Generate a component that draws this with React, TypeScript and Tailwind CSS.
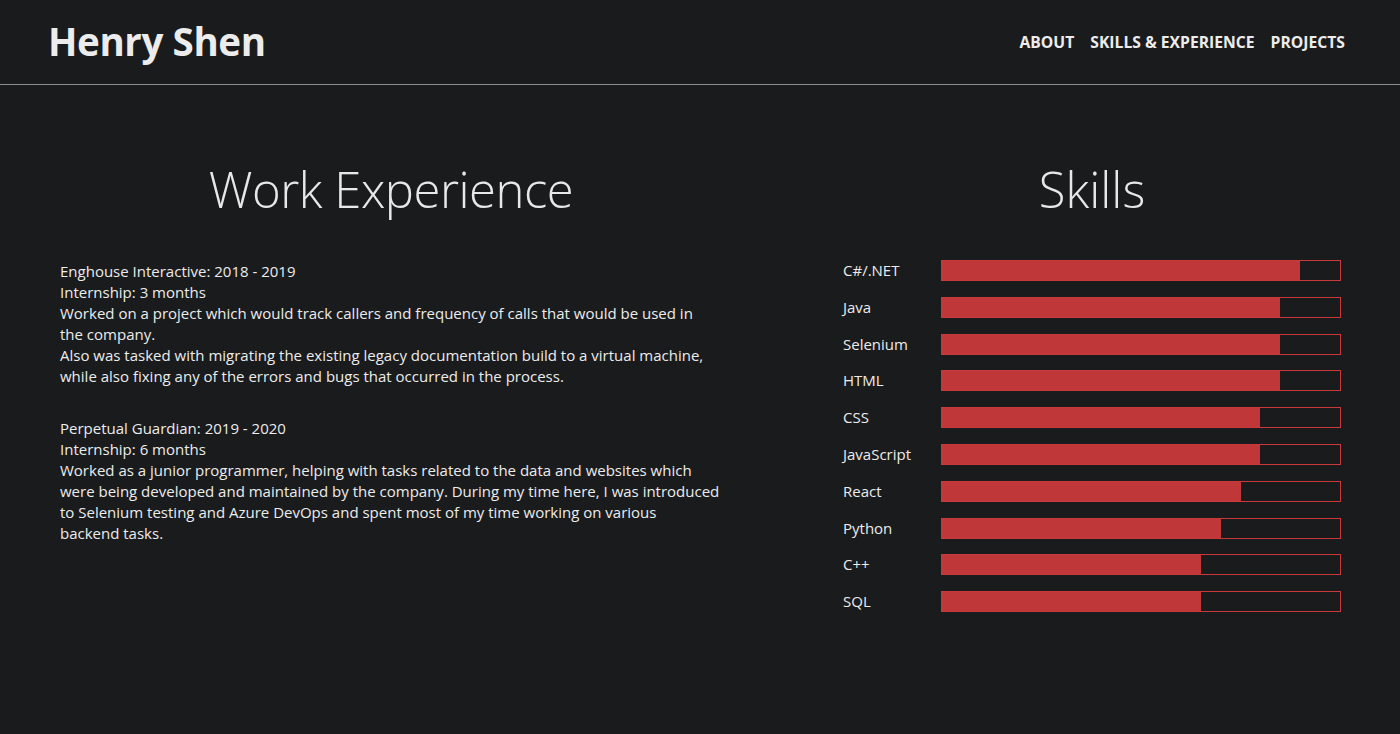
const skills = [
    { name: "C#/.NET", level: 90 },
    { name: "Java", level: 85 },
    { name: "Selenium", level: 85 },
    { name: "HTML", level: 85 },
    { name: "CSS", level: 80 },
    { name: "JavaScript", level: 80 },
    { name: "React", level: 75 },
    { name: "Python", level: 70 },
    { name: "C++", level: 65 },
    { name: "SQL", level: 65 },
];

// each entry is one printed line, broken where the original wraps
const jobs = [
    {
        title: "Enghouse Interactive: 2018 - 2019",
        lines: [
            "Internship: 3 months",
            "Worked on a project which would track callers and frequency of calls that would be used in",
            "the company.",
            "Also was tasked with migrating the existing legacy documentation build to a virtual machine,",
            "while also fixing any of the errors and bugs that occurred in the process.",
        ],
    },
    {
        title: "Perpetual Guardian: 2019 - 2020",
        lines: [
            "Internship: 6 months",
            "Worked as a junior programmer, helping with tasks related to the data and websites which",
            "were being developed and maintained by the company. During my time here, I was introduced",
            "to Selenium testing and Azure DevOps and spent most of my time working on various",
            "backend tasks.",
        ],
    },
];

export default function App() {
    return (
        <div className="min-h-[734px] bg-[#1a1b1d] text-[#ececec] font-['Segoe_UI','Open_Sans',sans-serif]">
            {/* Header */}
            <header className="flex items-center justify-between h-[85px] pl-[48px] pr-[55px] border-b border-[#8c8c8c]">
                <h1 className="text-[38.5px] font-bold tracking-[-0.01em]">Henry Shen</h1>
                <nav className="flex gap-4 pt-[2px] text-[15.7px] font-bold">
                    <a>ABOUT</a>
                    <a>SKILLS &amp; EXPERIENCE</a>
                    <a>PROJECTS</a>
                </nav>
            </header>

            <main className="flex pt-[74px] pl-[60px]">
                {/* Work experience */}
                <section className="w-[662px]">
                    <h2 className="text-center text-[49px] font-[350] leading-[60px] tracking-[-0.01em] text-[#e8e8e8]">Work Experience</h2>
                    <div className="mt-[42px] flex flex-col gap-[31px] text-[15px] leading-[21px] whitespace-nowrap">
                        {jobs.map((job) => (
                            <div key={job.title}>
                                <p>{job.title}</p>
                                {job.lines.map((l, i) => (
                                    <p key={i}>{l}</p>
                                ))}
                            </div>
                        ))}
                    </div>
                </section>

                {/* Skills */}
                <section className="ml-[121px] w-[498px]">
                    <h2 className="text-center text-[49px] font-[350] leading-[60px] text-[#e8e8e8]">Skills</h2>
                    <div className="mt-[41px] flex flex-col gap-[15.8px]">
                        {skills.map((s) => (
                            <div key={s.name} className="flex items-center h-[21px]">
                                <span className="w-[98px] text-[15px] leading-[21px]">{s.name}</span>
                                <div className="h-[21px] w-[400px] border border-[#c9383b]">
                                    <div className="h-full bg-[#c0373a]" style={{ width: `${s.level}%` }} />
                                </div>
                            </div>
                        ))}
                    </div>
                </section>
            </main>
        </div>
    );
}
